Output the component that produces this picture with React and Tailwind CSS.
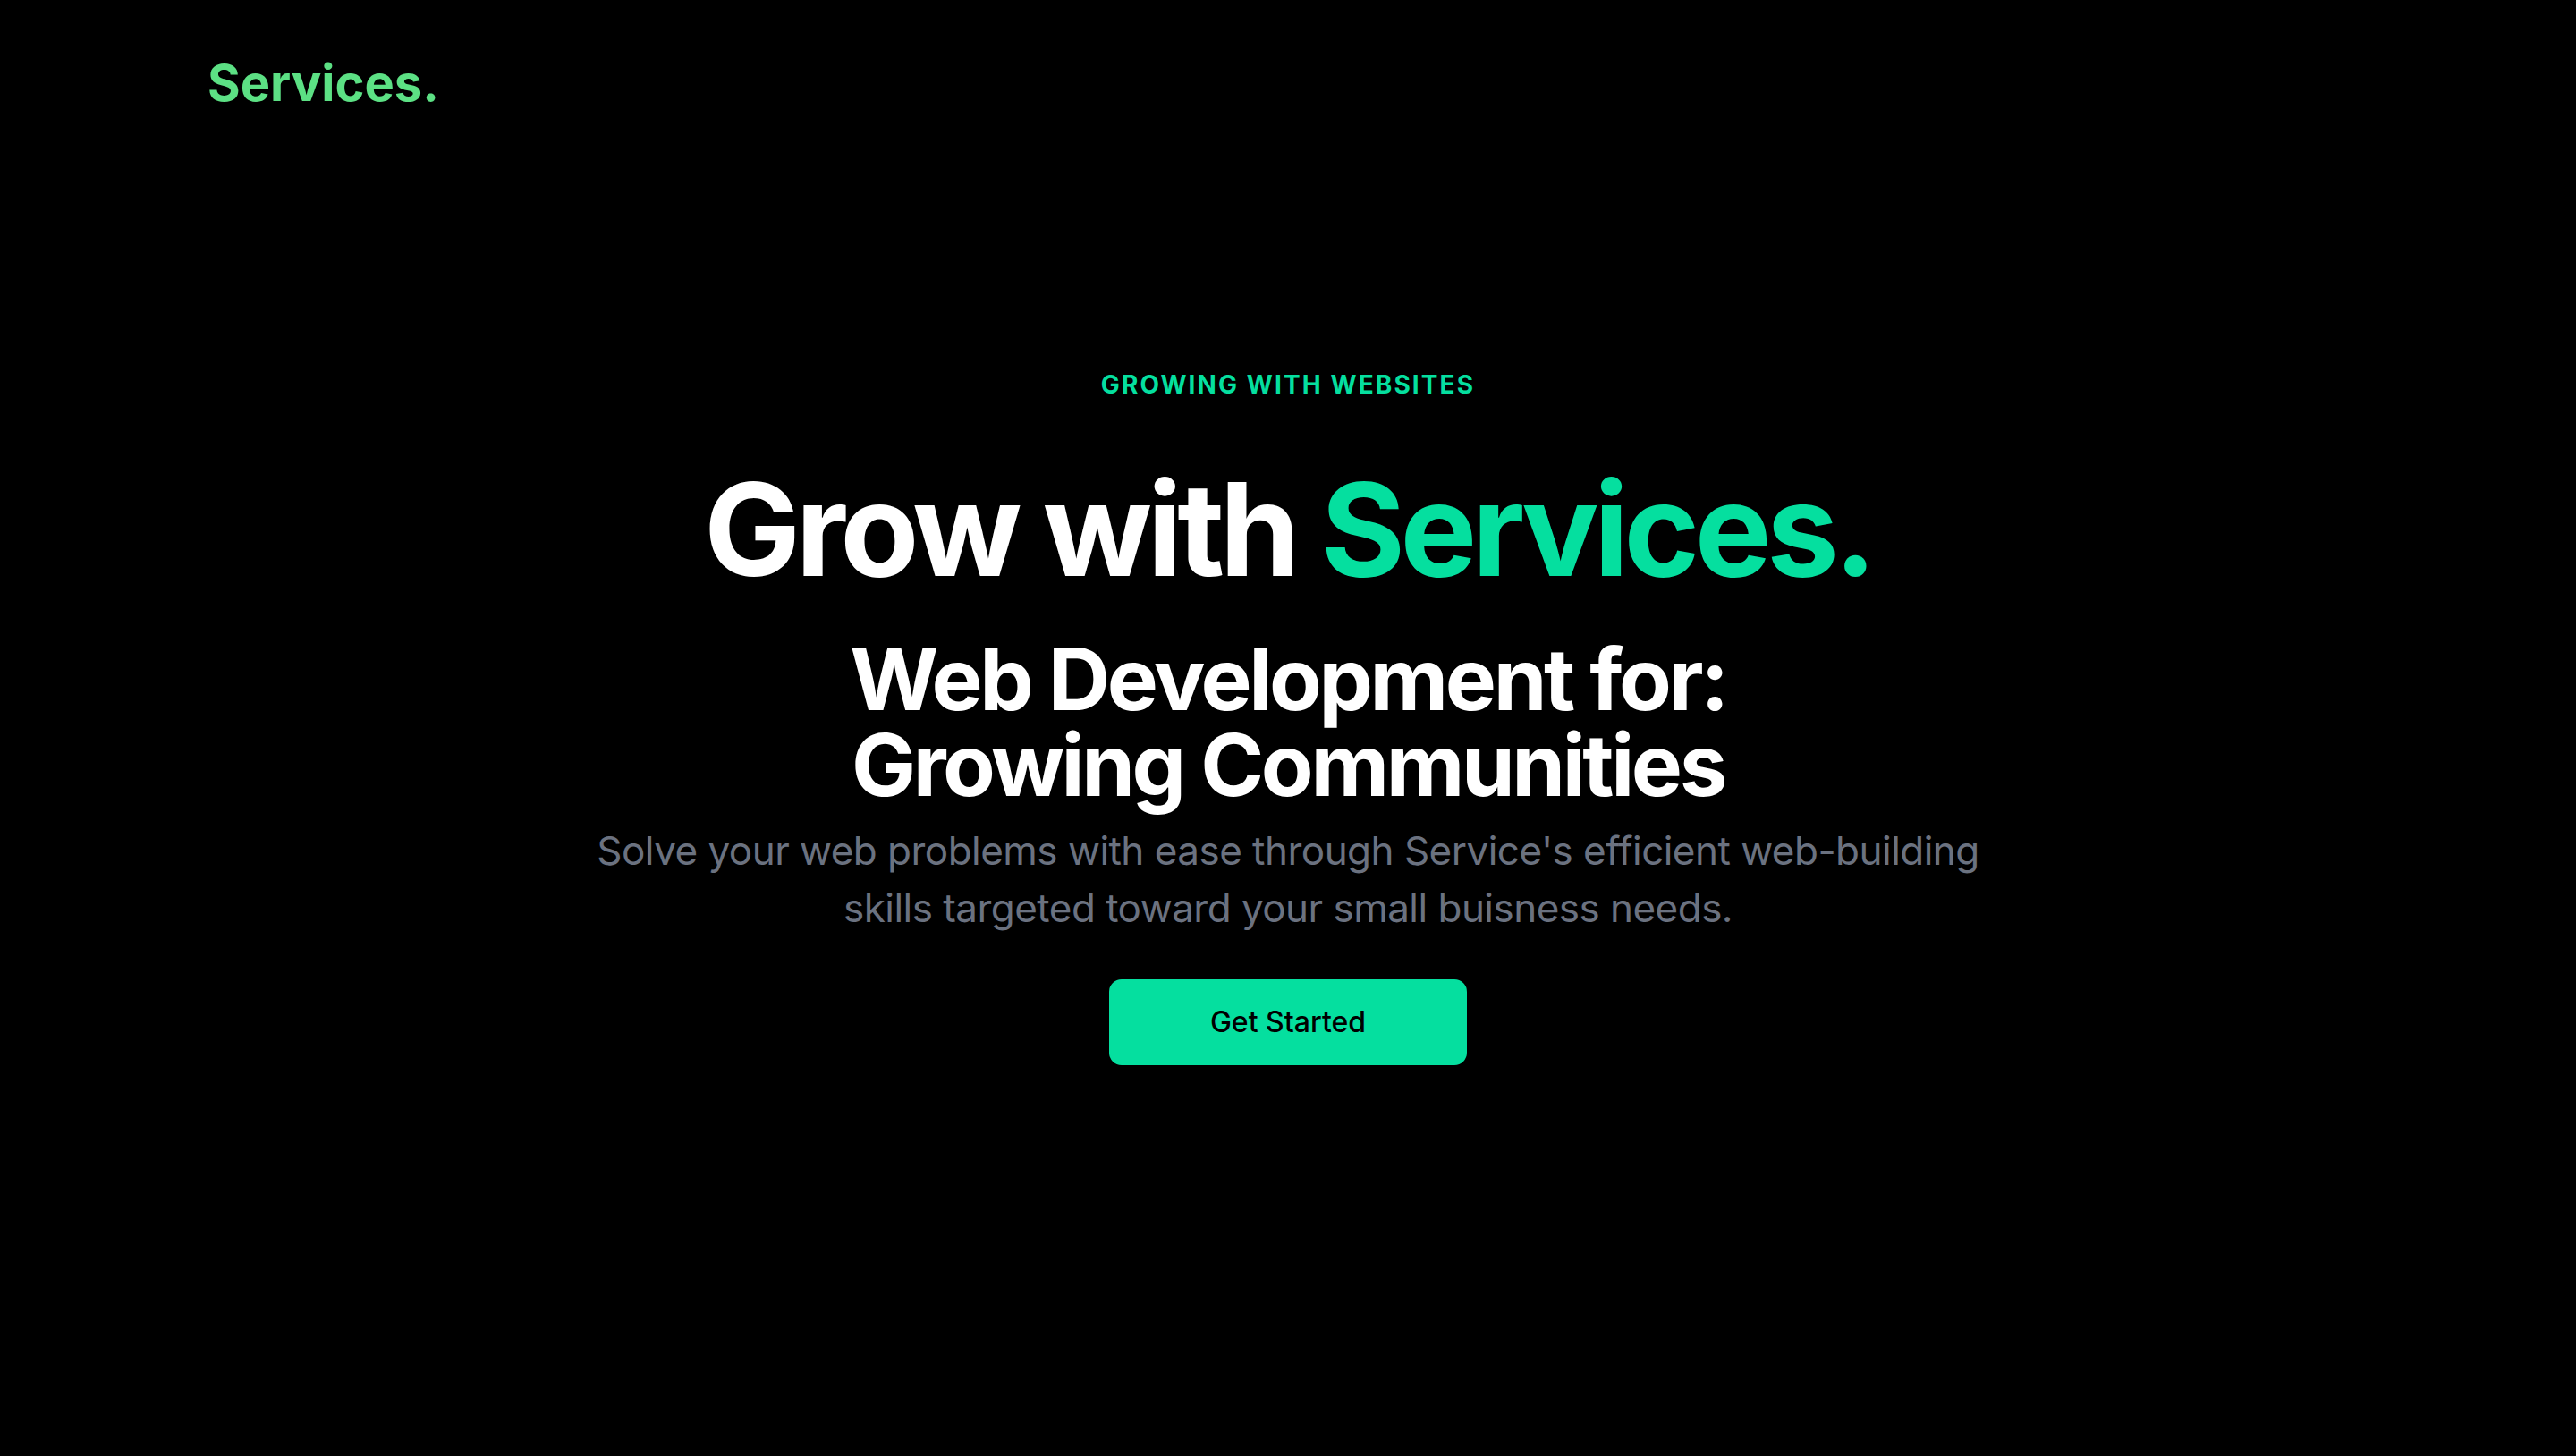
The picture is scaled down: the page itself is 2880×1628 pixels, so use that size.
import React from "react";

function App() {
  return (
    <div className="min-h-screen bg-black text-white font-['Inter',sans-serif]">
      <header className="px-[232px] pt-[61px]">
        <a href="#" className="text-[56px] leading-[64px] font-bold text-[#5ce084]">
          Services.
        </a>
      </header>

      <main className="flex flex-col items-center text-center pt-[285px]">
        <p className="text-[28px] leading-[40px] font-bold uppercase tracking-[0.075em] text-[#05df9f]">
          Growing with websites
        </p>
        <h1 className="mt-[70px] text-[144px] leading-[144px] font-bold tracking-[-0.038em]">
          Grow with <span className="text-[#05df9f]">Services.</span>
        </h1>
        <h2 className="mt-[47px] text-[96px] leading-[96px] font-bold tracking-[-0.035em]">
          Web Development for:
          <br />
          Growing Communities
        </h2>
        <p className="mt-[16px] whitespace-nowrap text-[44px] leading-[64px] tracking-[-0.012em] text-[#6b7280]">
          Solve your web problems with ease through Service's efficient web-building
          <br />
          skills targeted toward your small buisness needs.
        </p>
        <button className="mt-[48px] w-[400px] h-[96px] rounded-[14px] bg-[#05df9f] text-black text-[32px] font-medium">
          Get Started
        </button>
      </main>
    </div>
  );
}

export default App;
